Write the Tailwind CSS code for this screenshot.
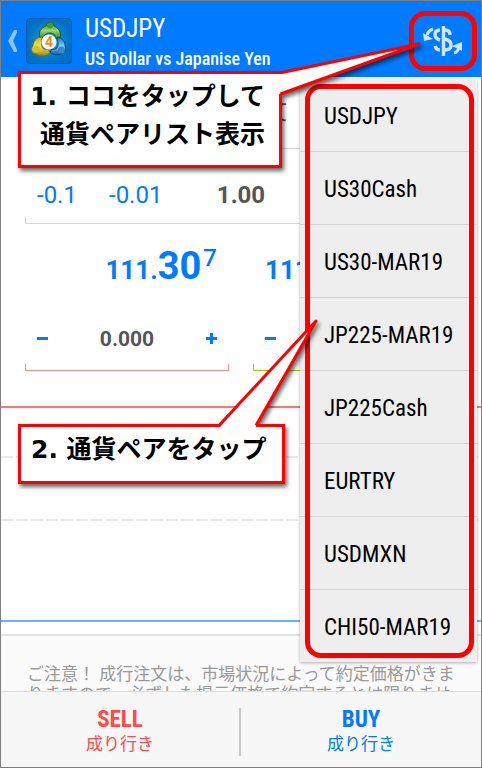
<!doctype html>
<html lang="ja" class="h-full">
<head>
  <meta charset="utf-8">
  <meta name="viewport" content="width=device-width,initial-scale=1">
  <title>USDJPY</title>
  <script src="https://cdn.jsdelivr.net/npm/@tailwindcss/browser@4"></script>
</head>
<body class="relative flex min-h-screen flex-col border border-[#808080] bg-white font-['Roboto','Noto_Sans_CJK_JP',sans-serif]">

  <header class="flex h-19 items-center bg-[#007aff] pr-3 pl-1 text-white">
    <a href="#" aria-label="戻る" class="flex items-center gap-2 pt-1">
      <svg class="h-6 w-3" viewBox="0 0 12 24" fill="#8cc4ff"><path d="M9 1h4L8 12 13 23H9L3 12z"/></svg>
      <svg class="size-12" viewBox="0 0 48 48">
        <defs>
          <radialGradient id="tile"><stop offset="0" stop-color="#13a2dc"/><stop offset="1" stop-color="#0070c4"/></radialGradient>
          <linearGradient id="green" x2="0" y2="1"><stop offset="0" stop-color="#2f8f2a"/><stop offset=".5" stop-color="#9fd36c"/><stop offset="1" stop-color="#2c7a2a"/></linearGradient>
          <linearGradient id="gold" x2="0" y2="1"><stop offset="0" stop-color="#c9b414"/><stop offset=".5" stop-color="#f3e65c"/><stop offset="1" stop-color="#9d8510"/></linearGradient>
          <linearGradient id="blue" x2="0" y2="1"><stop offset="0" stop-color="#1c6fb8"/><stop offset=".5" stop-color="#8accf2"/><stop offset="1" stop-color="#0d549c"/></linearGradient>
        </defs>
        <rect x="1.500" y="1.500" width="45" height="45" rx="4" fill="url(#tile)" stroke="#0757a6"/>
        <path d="M15 21c-2-6 1-10 6-12 1-5 7-5 8 0 4 2 8 6 6 12l-4 1c0-4-3-6-6-6-4 0-6 2-6 6z" fill="url(#green)" stroke="#1d5f22"/>
        <path d="M17 20c-6 0-9 5-9 9-3 3-1 8 3 8 5 3 11 2 14-1l-2-4c-3 1-6 0-6-3-1-3 0-6 0-9z" fill="url(#gold)" stroke="#86700c"/>
        <path d="M32 20c6 1 8 5 8 9 2 3 0 7-4 8-4 2-8 1-11-2l2-3c3 1 6-1 6-4 0-2 0-5-1-8z" fill="url(#blue)" stroke="#0b4a88"/>
        <circle cx="25" cy="8.500" r="3" fill="#3c9c36"/>
        <circle cx="11.500" cy="32" r="3.500" fill="#d3c02a"/>
        <circle cx="36.500" cy="33" r="3.500" fill="#3789cc"/>
        <circle cx="24" cy="25" r="7.500" fill="#fff"/>
        <text x="24" y="30" text-anchor="middle" font-family="Roboto" font-size="14" font-weight="700" fill="#f08a1c">4</text>
      </svg>
    </a>
    <div class="grow pt-2 pl-3 font-['Roboto_Condensed','Liberation_Sans_Narrow',Roboto,sans-serif]">
      <h1 class="text-[25px] leading-8">USDJPY</h1>
      <p class="text-lg leading-7 font-medium">US Dollar vs Japanise Yen</p>
    </div>
    <button type="button" aria-label="通貨ペア" class="z-10 -mr-2 -mb-1 flex h-15 w-17 items-center justify-center rounded-2xl border-5 border-[#f00]">
      <svg class="h-8 w-10" viewBox="0 0 40 32" fill="none" stroke="#cfe5ff">
        <path d="M17 5c-4 0-5 2-5 5s2 4 5 5M12 21c1 3 2 4 5 4M22 5c4 0 5 2 5 5M22 14c4 1 6 3 6 6s-2 5-6 5" stroke-width="3.500"/>
        <path d="M20.500 1v30" stroke-width="3.500"/>
        <path d="M10 4C7 5 5 7 4 10M31 28c3-1 5-3 5-7" stroke-width="3"/>
        <path d="M0 8l10 6-9 2zM29 21l10-4v9z" fill="#cfe5ff" stroke="none"/>
      </svg>
    </button>
  </header>

  <main class="flex grow flex-col">
    <div class="mx-6 flex h-18 items-center justify-center border-b border-[#d6d6d6] text-[23px] text-[#555]">成行注文</div>

    <!-- volume -->
    <div class="mx-6 grid h-18 grid-cols-[60px_90px_1fr_90px_60px] items-center pt-5 text-2xl text-[#007aff]">
      <button type="button" class="pl-3 text-left">-0.1</button>
      <button type="button" class="pl-6 text-left">-0.01</button>
      <output class="text-center font-bold text-[#555]">1.00</output>
      <button type="button">+0.01</button>
      <button type="button">+0.1</button>
    </div>
    <div class="mx-6 -mt-1 h-[7px] border-x border-b border-[#d6d6d6]"></div>

    <!-- bid / ask -->
    <div class="mx-6 grid h-22 grid-cols-2 items-center font-bold text-[#007aff]">
      <p class="flex items-baseline justify-end pr-6 text-[26px] leading-10">111.<span class="text-[38px]">30</span><span class="self-start pl-0.5 text-2xl leading-6 font-medium">7</span></p>
      <p class="flex items-baseline pl-6 text-[26px] leading-10">111.<span class="text-[38px]">31</span><span class="self-start pl-0.5 text-2xl leading-6 font-medium">8</span></p>
    </div>

    <!-- stop loss / take profit -->
    <div class="mx-6 grid grid-cols-2 gap-6 text-[21px] font-bold text-[#555]">
      <div>
        <div class="flex h-13 items-center justify-between px-3">
          <button type="button" aria-label="減らす" class="h-[3px] w-[11px] bg-[#007aff]"></button>
          <output class="pt-1">0.000</output>
          <button type="button" aria-label="増やす" class="text-[#007aff]"><svg class="size-[11px]" viewBox="0 0 11 11" fill="none" stroke="currentColor" stroke-width="3"><path d="M0 5.500h11M5.500 0v11"/></svg></button>
        </div>
        <div class="h-[7px] border-x border-b border-[#ff8a8a]"></div>
      </div>
      <div>
        <div class="flex h-13 items-center justify-between px-3">
          <button type="button" aria-label="減らす" class="h-[3px] w-[11px] bg-[#007aff]"></button>
          <output class="pt-1">0.000</output>
          <button type="button" aria-label="増やす" class="text-[#007aff]"><svg class="size-[11px]" viewBox="0 0 11 11" fill="none" stroke="currentColor" stroke-width="3"><path d="M0 5.500h11M5.500 0v11"/></svg></button>
        </div>
        <div class="h-[7px] border-x border-b border-[#99cc00]"></div>
      </div>
    </div>

    <!-- tick chart -->
    <svg class="h-[263px] w-full" fill="none" stroke-width="2">
      <path d="M0 36h1000" stroke="#ff7474"/>
      <path d="M0 86h1000M0 149h1000" stroke="#e9e9e9" stroke-dasharray="12 3"/>
      <path d="M0 250h1000" stroke="#6bb1ff"/>
    </svg>

    <div class="h-0 grow overflow-hidden border-t-2 border-[#e3e3e3] bg-[#fbfbfb] pt-7 pr-5 pl-6.5 text-[17px] leading-5 text-[#999]">
      ご注意！ 成行注文は、市場状況によって約定価格がきまりますので、必ずしも提示価格で約定するとは限りません。
    </div>
  </main>

  <footer class="grid h-19 grid-cols-2 border-t border-[#ddd] bg-[#f7f7f7] py-4">
    <button type="button" class="flex flex-col items-center justify-center border-r-2 border-[#ccc] text-[17px] leading-6 text-[#ff4a4a]">
      <b class="font-['Roboto_Condensed','Liberation_Sans_Narrow',Roboto,sans-serif] text-[23px]">SELL</b>成り行き
    </button>
    <button type="button" class="flex flex-col items-center justify-center text-[17px] leading-6 text-[#007aff]">
      <b class="font-['Roboto_Condensed','Liberation_Sans_Narrow',Roboto,sans-serif] text-[23px]">BUY</b>成り行き
    </button>
  </footer>

  <!-- symbol menu -->
  <nav class="absolute top-[78px] right-1 w-[177px] bg-[#eee] font-['Roboto_Condensed','Liberation_Sans_Narrow',Roboto,sans-serif] text-[23px] text-black shadow-[0_1px_3px_rgba(0,0,0,0.3)]">
    <ul class="divide-y divide-[#d3d3d3]">
      <li><a href="#" class="flex h-18 items-center pt-1 pl-6">USDJPY</a></li>
      <li><a href="#" class="flex h-18 items-center pt-1 pl-6">US30Cash</a></li>
      <li><a href="#" class="flex h-18 items-center pt-1 pl-6">US30-MAR19</a></li>
      <li><a href="#" class="flex h-18 items-center pt-1 pl-6">JP225-MAR19</a></li>
      <li><a href="#" class="flex h-18 items-center pt-1 pl-6">JP225Cash</a></li>
      <li><a href="#" class="flex h-18 items-center pt-1 pl-6">EURTRY</a></li>
      <li><a href="#" class="flex h-18 items-center pt-1 pl-6">USDMXN</a></li>
      <li><a href="#" class="flex h-18 items-center pt-1 pl-6">CHI50-MAR19</a></li>
    </ul>
    <div class="pointer-events-none absolute top-[5px] right-[3px] bottom-1 left-[5px] rounded-2xl border-5 border-[#f00]"></div>
  </nav>

  <!-- callouts -->
  <div class="absolute top-[70px] left-[17px] z-20 h-[97px] w-[264px] border-3 border-[#f00] bg-white pt-1 pr-3.5 text-right font-['DejaVu_Sans','Noto_Sans_CJK_JP',sans-serif] text-[25px] leading-[38px] font-bold text-black drop-shadow-[2px_3px_2px_rgba(0,0,0,0.6)]">
    <p>1. ココをタップして</p>
    <p>通貨ペアリスト表示</p>
    <svg class="absolute -top-9 left-[256px] h-16 w-36" viewBox="0 0 144 64"><path d="M0 37L5 34 142 6 5 55 0 57z" fill="#fff"/><path d="M2 34.500H5L142 6 3.500 56" fill="none" stroke="#f00" stroke-width="3" stroke-linejoin="round"/></svg>
  </div>
  <div class="absolute top-[423px] left-[17px] z-20 h-15 w-[267px] border-3 border-[#f00] bg-white pt-1 pl-2.5 font-['DejaVu_Sans','Noto_Sans_CJK_JP',sans-serif] text-[25px] leading-[38px] font-bold text-black drop-shadow-[2px_3px_2px_rgba(0,0,0,0.6)]">
    <p>2. 通貨ペアをタップ</p>
    <svg class="absolute -top-[108px] left-[196px] h-[110px] w-[104px]" viewBox="0 0 104 110"><path d="M2 109L99 2 39 106V109z" fill="#fff"/><path d="M2 106.500L99 2 39 106.500" fill="none" stroke="#f00" stroke-width="3" stroke-linejoin="round"/></svg>
  </div>
</body>
</html>
